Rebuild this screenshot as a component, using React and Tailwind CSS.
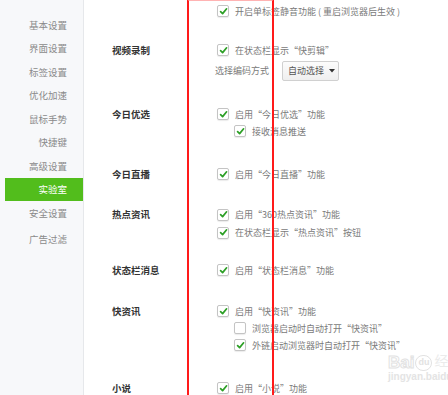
import React from "react";

const font = { fontFamily: '"Noto Sans CJK SC", "Noto Sans", sans-serif' };

function Box({ checked = true }) {
  return (
    <span className="flex h-[12px] w-[12px] shrink-0 items-center justify-center rounded-[2px] border border-[#c4c4c4] bg-white shadow-[0_1px_1px_rgba(0,0,0,0.08)]">
      {checked && (
        <svg width="9" height="9" viewBox="0 0 9 9">
          <path d="M1.6 4.6 L3.6 6.6 L7.6 1.8" fill="none" stroke="#2c9f25" strokeWidth="1.7" strokeLinecap="round" strokeLinejoin="round" />
        </svg>
      )}
    </span>
  );
}

function Opt({ text, checked = true, sub = false, h = "h-[17px]" }) {
  return (
    <div className={`flex items-center ${h} ${sub ? "pl-[17px]" : ""}`}>
      <Box checked={checked} />
      <span className="ml-[6px] whitespace-pre text-[9px] leading-none text-[#7a7a7a]">{text}</span>
    </div>
  );
}

function Section({ label, mt, children }) {
  return (
    <div className={`flex ${mt}`}>
      <div className="h-[17px] w-[105px] shrink-0 text-[9.5px] font-bold leading-[17px] text-[#333]">{label}</div>
      <div className="flex flex-col">{children}</div>
    </div>
  );
}

const nav = ["基本设置", "界面设置", "标签设置", "优化加速", "鼠标手势", "快捷键", "高级设置", "实验室", "安全设置", "广告过滤"];

export default function App() {
  return (
    <div className="relative flex h-[395px] w-[448px] overflow-hidden bg-white" style={font}>
      <div className="flex h-full w-[84px] shrink-0 flex-col border-r border-[#e6e8eb] bg-[#f7f8fa] pl-[5px] pt-[13px]">
        {nav.map((n, i) => (
          <div
            key={n}
            className={`flex h-[23.5px] items-center justify-end pr-[16px] text-[9.5px] ${
              n === "实验室" ? "bg-[#52bd1c] text-white" : "text-[#8a8a8a]"
            } ${i === 9 ? "mt-[3px]" : ""}`}
          >
            {n}
          </div>
        ))}
      </div>

      <div className="flex flex-col pl-[28px] pt-[2.5px]">
        <Section label="" mt="">
          <Opt text="开启单标签静音功能 ( 重启浏览器后生效 )" />
        </Section>

        <Section label="视频录制" mt="mt-[22px]">
          <Opt text="在状态栏显示“快剪辑”" />
          <div className="mt-[2px] flex h-[21px] items-center">
            <span className="-ml-[2px] text-[9px] text-[#7a7a7a]">选择编码方式</span>
            <div className="ml-[13px] flex h-[20px] w-[57px] items-center rounded-[2px] border border-[#d0d0d0] bg-gradient-to-b from-[#fcfcfc] to-[#efefef] pl-[5px]">
              <span className="text-[9px] text-[#555]">自动选择</span>
              <svg className="ml-[5px]" width="6" height="4" viewBox="0 0 6 4">
                <path d="M0 0 L6 0 L3 3.5 Z" fill="#333" />
              </svg>
            </div>
          </div>
        </Section>

        <Section label="今日优选" mt="mt-[24px]">
          <Opt text="启用“今日优选”功能" />
          <Opt text="接收消息推送" sub />
        </Section>

        <Section label="今日直播" mt="mt-[26px]">
          <Opt text="启用“今日直播”功能" />
        </Section>

        <Section label="热点资讯" mt="mt-[23px]">
          <Opt text="启用“360热点资讯”功能" h="h-[18px]" />
          <Opt text="在状态栏显示“热点资讯”按钮" h="h-[18px]" />
        </Section>

        <Section label="状态栏消息" mt="mt-[20px]">
          <Opt text="启用“状态栏消息”功能" />
        </Section>

        <Section label="快资讯" mt="mt-[24px]">
          <Opt text="启用“快资讯”功能" />
          <Opt text="浏览器启动时自动打开“快资讯”" sub checked={false} />
          <Opt text="外链启动浏览器时自动打开“快资讯”" sub />
        </Section>

        <Section label="小说" mt="mt-[26px]">
          <Opt text="启用“小说”功能" />
        </Section>
      </div>

      {/* Baidu watermark */}
      <div className="pointer-events-none absolute left-[388px] top-[350px] flex flex-col">
        <div className="flex items-end">
          <span className="text-[17px] font-bold leading-none text-transparent [-webkit-text-stroke:1px_#e2e2e2]" style={{ fontFamily: '"Liberation Sans", sans-serif' }}>
            Bai
          </span>
          <span className="ml-[1px] flex h-[16px] w-[17px] items-center justify-center rounded-full border border-[#e2e2e2] text-[9px] font-bold text-[#e2e2e2]" style={{ fontFamily: '"Liberation Sans", sans-serif' }}>
            du
          </span>
          <span className="ml-[2px] text-[14px] text-[#ebebeb]">经验</span>
        </div>
        <span className="mt-[1px] text-[10px] font-bold leading-none text-[#e4e4e4]" style={{ fontFamily: '"Liberation Sans", sans-serif' }}>
          jingyan.baidu.com
        </span>
      </div>

      {/* red annotation rectangle */}
      <div className="pointer-events-none absolute left-[187px] top-[-1px] h-[420px] w-[87px] border-2 border-[#ff1a1a] border-t-[#ffb3b3]" />
    </div>
  );
}
